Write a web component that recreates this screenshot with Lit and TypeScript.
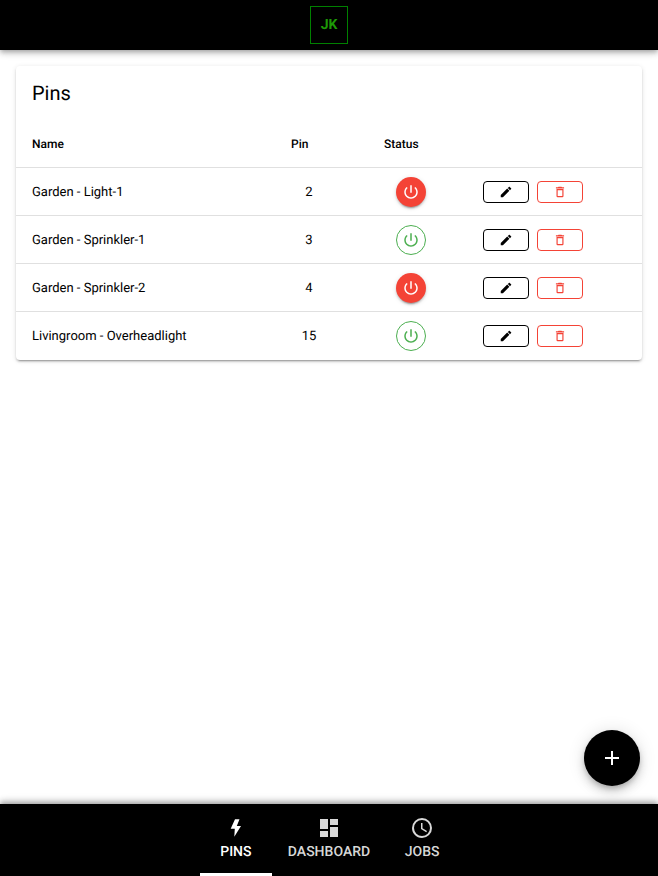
import { LitElement, css, html, svg } from 'lit';
import { customElement } from 'lit/decorators.js';

const icons = {
  flash: 'M11 3.3L6.7 12.7H10.8L10.3 20.7L17 10H12.8L15.5 3.3Z',
  dashboard: 'M13,3V9H21V3M13,21H21V11H13M3,21H11V15H3M3,13H11V3H3V13Z',
  clock:
    'M12,20A8,8 0 0,0 20,12A8,8 0 0,0 12,4A8,8 0 0,0 4,12A8,8 0 0,0 12,20M12,2A10,10 0 0,1 22,12A10,10 0 0,1 12,22C6.47,22 2,17.5 2,12A10,10 0 0,1 12,2M12.5,7V12.25L17,14.92L16.25,16.15L11,13V7H12.5Z',
  power:
    'M13 3h-2v10h2V3zm4.83 2.17l-1.42 1.42C17.99 7.86 19 9.81 19 12c0 3.87-3.13 7-7 7s-7-3.13-7-7c0-2.19 1.01-4.14 2.58-5.42L6.17 5.17C4.23 6.82 3 9.26 3 12c0 4.97 4.03 9 9 9s9-4.03 9-9c0-2.74-1.23-5.18-3.17-6.83z',
  pencil:
    'M20.71,7.04C21.1,6.65 21.1,6 20.71,5.63L18.37,3.29C18,2.9 17.35,2.9 16.96,3.29L15.12,5.12L18.87,8.87M3,17.25V21H6.75L17.81,9.93L14.06,6.18L3,17.25Z',
  trash: 'M6,19A2,2 0 0,0 8,21H16A2,2 0 0,0 18,19V7H6V19M8,9H16V19H8V9M15.5,4L14.5,3H9.5L8.5,4H5V6H19V4H15.5Z',
  plus: 'M19,13H13V19H11V13H5V11H11V5H13V11H19V13Z',
};

const icon = (name: keyof typeof icons, size: number) =>
  html`<svg width=${size} height=${size} viewBox="0 0 24 24" fill="currentColor">${svg`<path d=${icons[name]} />`}</svg>`;

const pins = [
  { name: 'Garden - Light-1', pin: 2, on: false },
  { name: 'Garden - Sprinkler-1', pin: 3, on: true },
  { name: 'Garden - Sprinkler-2', pin: 4, on: false },
  { name: 'Livingroom - Overheadlight', pin: 15, on: true },
];

@customElement('app-root')
export class AppRoot extends LitElement {
  static override styles = css`
    :host {
      display: flex;
      flex-direction: column;
      position: relative;
      height: 876px;
      overflow: hidden;
      background: #fff;
      font-family: Roboto, sans-serif;
      color: #000;
      text-rendering: geometricPrecision;
      -webkit-font-smoothing: antialiased;
    }
    header {
      flex: none;
      height: 50px;
      background: #000;
      display: flex;
      align-items: center;
      justify-content: center;
      box-shadow: 0 2px 4px -1px rgba(0, 0, 0, 0.2), 0 4px 5px 0 rgba(0, 0, 0, 0.14), 0 1px 10px 0 rgba(0, 0, 0, 0.12);
    }
    .avatar {
      box-sizing: border-box;
      width: 38px;
      height: 38px;
      border: 1px solid #008000;
      color: #1d9a06;
      font-size: 14px;
      font-weight: 700;
      display: flex;
      align-items: center;
      justify-content: center;
    }
    main {
      flex: 1;
      padding: 16px;
    }
    .card {
      border-radius: 4px;
      background: #fff;
      box-shadow: 0 3px 1px -2px rgba(0, 0, 0, 0.2), 0 2px 2px 0 rgba(0, 0, 0, 0.14), 0 1px 5px 0 rgba(0, 0, 0, 0.12);
    }
    h1 {
      margin: 0;
      height: 54px;
      box-sizing: border-box;
      padding: 12px 16px 0;
      font-size: 20px;
      font-weight: 400;
      line-height: 30px;
    }
    .row {
      display: grid;
      grid-template-columns: 259px 68px 136px 1fr;
      align-items: center;
      height: 48px;
      font-size: 13px;
      border-bottom: 1px solid #e0e0e0;
      box-sizing: border-box;
    }
    .row:last-child {
      border-bottom: 0;
    }
    .row.head {
      font-size: 12px;
      font-weight: 500;
    }
    .name {
      padding: 1px 0 0 16px;
    }
    .pin {
      padding-top: 1px;
      text-align: center;
    }
    .head .name {
      padding-top: 0;
    }
    .head .pin {
      padding: 0 0 0 16px;
      text-align: left;
    }
    .status {
      display: flex;
      justify-content: center;
    }
    .head .status {
      justify-content: flex-start;
      padding-left: 41px;
    }
    .power {
      box-sizing: border-box;
      width: 30px;
      height: 30px;
      border-radius: 50%;
      display: flex;
      align-items: center;
      justify-content: center;
    }
    .power.off {
      background: #f44336;
      color: #fff;
      box-shadow: 0 3px 1px -2px rgba(0, 0, 0, 0.2), 0 2px 2px 0 rgba(0, 0, 0, 0.14), 0 1px 5px 0 rgba(0, 0, 0, 0.12);
    }
    .power.on {
      border: 1px solid #4caf50;
      color: #4caf50;
    }
    .actions {
      display: flex;
      gap: 8px;
      padding-left: 4px;
    }
    .btn {
      box-sizing: border-box;
      width: 46px;
      height: 22px;
      border: 1px solid currentColor;
      border-radius: 4px;
      display: flex;
      align-items: center;
      justify-content: center;
    }
    .btn.edit {
      color: #000;
    }
    .btn.del {
      color: #f44336;
    }
    .fab {
      position: absolute;
      right: 18px;
      bottom: 90px;
      width: 56px;
      height: 56px;
      border-radius: 50%;
      background: #000;
      color: #fff;
      display: flex;
      align-items: center;
      justify-content: center;
      box-shadow: 0 3px 5px -1px rgba(0, 0, 0, 0.2), 0 6px 10px 0 rgba(0, 0, 0, 0.14), 0 1px 18px 0 rgba(0, 0, 0, 0.12);
    }
    nav {
      flex: none;
      height: 72px;
      background: #000;
      display: flex;
      justify-content: center;
      box-shadow: 0 -2px 4px -1px rgba(0, 0, 0, 0.2), 0 -4px 5px 0 rgba(0, 0, 0, 0.14), 0 -1px 10px 0 rgba(0, 0, 0, 0.12);
    }
    .tab {
      box-sizing: border-box;
      min-width: 72px;
      padding: 12px 16px 0;
      display: flex;
      flex-direction: column;
      align-items: center;
      gap: 3px;
      color: rgba(255, 255, 255, 0.85);
      font-size: 14px;
      font-weight: 500;
      line-height: 18px;
      text-transform: uppercase;
    }
    .tab.active {
      color: #fff;
      border-bottom: 3px solid #fff;
    }
  `;

  override render() {
    return html`
      <header><div class="avatar">JK</div></header>
      <main>
        <section class="card">
          <h1>Pins</h1>
          <div class="row head">
            <div class="name">Name</div>
            <div class="pin">Pin</div>
            <div class="status">Status</div>
            <div></div>
          </div>
          ${pins.map(
            (p) => html`
              <div class="row">
                <div class="name">${p.name}</div>
                <div class="pin">${p.pin}</div>
                <div class="status">
                  <div class="power ${p.on ? 'on' : 'off'}">${icon('power', 18)}</div>
                </div>
                <div class="actions">
                  <div class="btn edit">${icon('pencil', 14)}</div>
                  <div class="btn del">${icon('trash', 14)}</div>
                </div>
              </div>
            `
          )}
        </section>
      </main>
      <div class="fab">${icon('plus', 24)}</div>
      <nav>
        <div class="tab active">${icon('flash', 24)}<span>Pins</span></div>
        <div class="tab">${icon('dashboard', 24)}<span>Dashboard</span></div>
        <div class="tab">${icon('clock', 24)}<span>Jobs</span></div>
      </nav>
    `;
  }
}
